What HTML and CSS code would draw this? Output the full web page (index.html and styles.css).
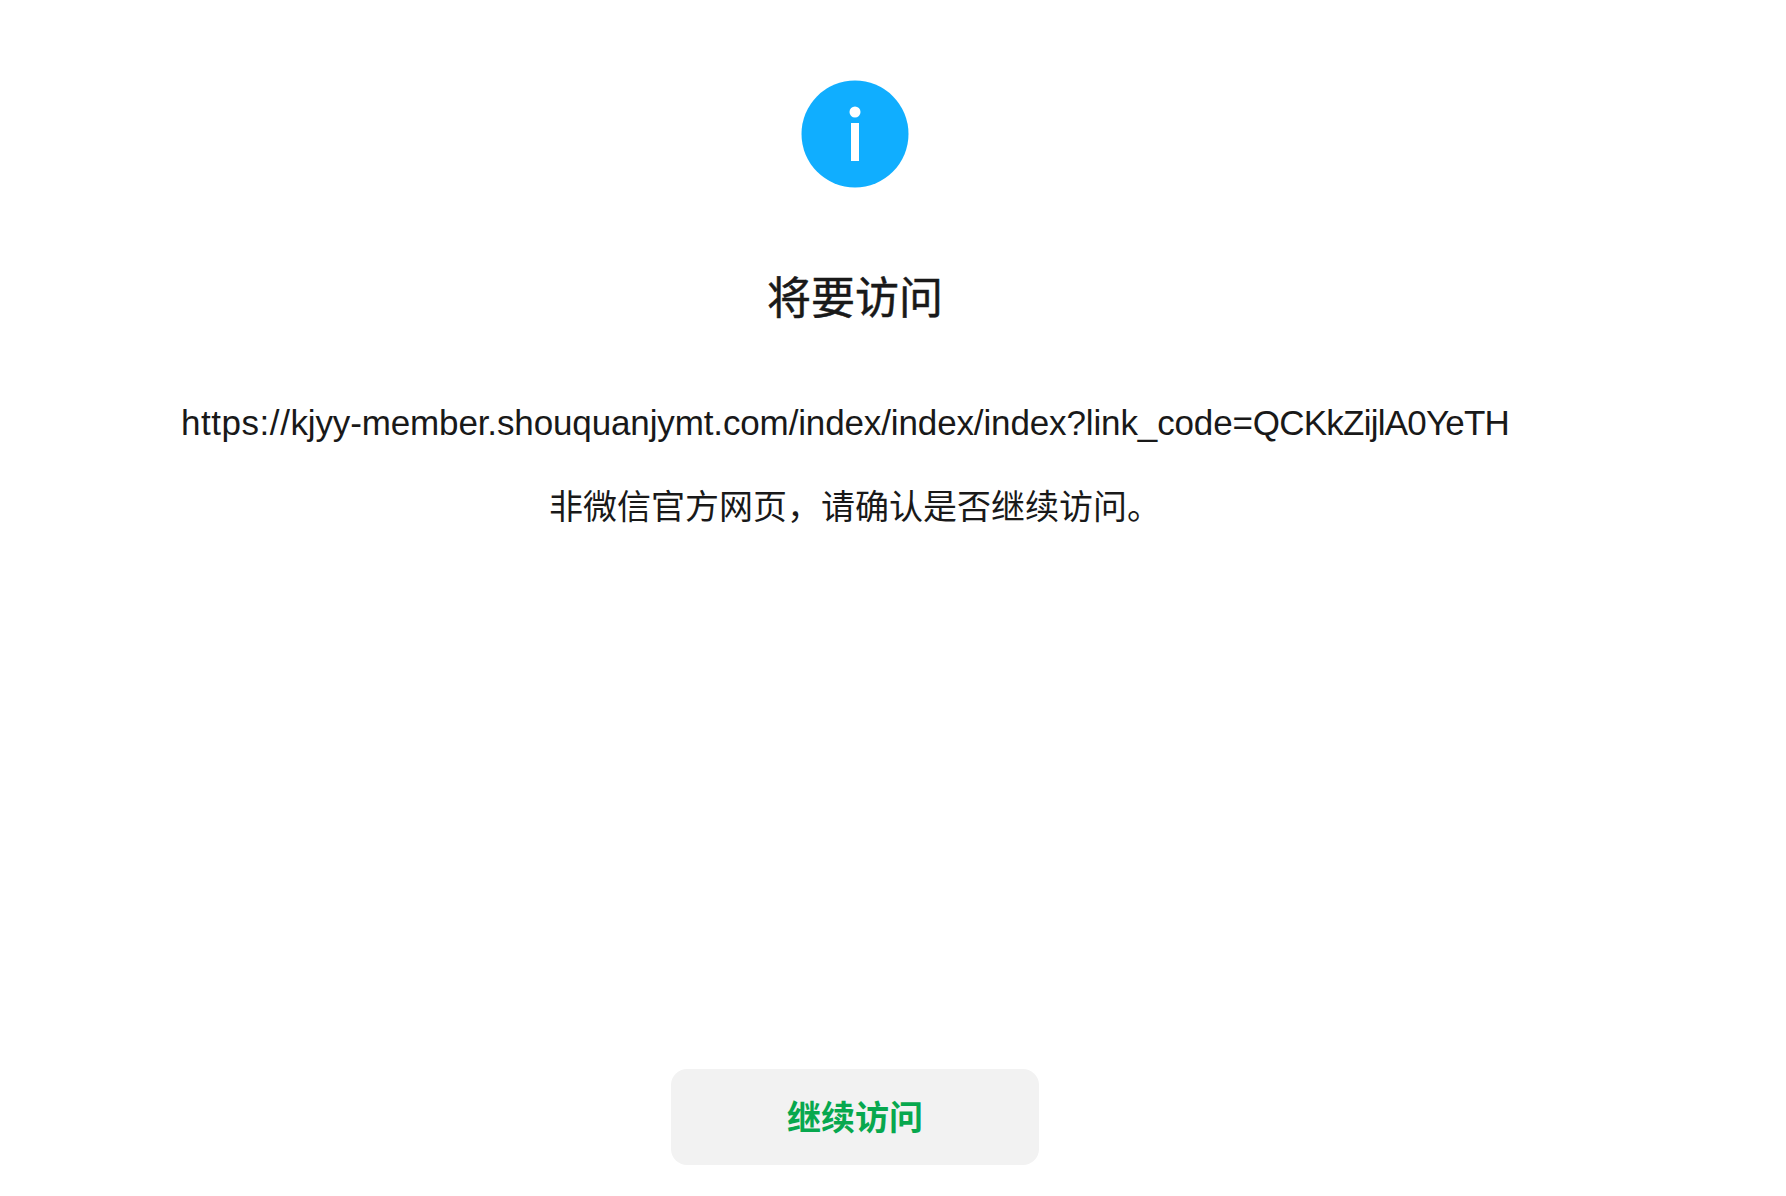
FILE: index.html
```html
<!DOCTYPE html>
<html lang="zh-CN">
<head>
<meta charset="utf-8">
<title>将要访问</title>
<link rel="stylesheet" href="styles.css">
</head>
<body>
<main class="page">
  <div class="top">
    <svg class="icon" viewBox="0 0 108 108" width="108" height="108" aria-hidden="true">
      <circle cx="54" cy="54" r="53.5" fill="#10AEFF"/>
      <circle cx="54" cy="32" r="5.5" fill="#fff"/>
      <rect x="50" y="43" width="8" height="38" fill="#fff"/>
    </svg>
    <h1 class="title">将要访问</h1>
    <p class="url"><span class="url-scheme">https://</span>kjyy-member.shouquanjymt.com/index/index/index?link_code=<span class="url-code">QCKkZijlA0YeTH</span></p>
    <p class="note">非微信官方网页，请确认是否继续访问。</p>
  </div>
  <a class="btn">继续访问</a>
</main>
</body>
</html>
```
FILE: styles.css
```css
html, body { margin: 0; padding: 0; background: #fff; }
body {
  font-family: "Liberation Sans", "Noto Sans CJK SC", sans-serif;
  color: #191919;
}
.page {
  width: 1710px;
  height: 1196px;
  box-sizing: border-box;
  padding: 80px 0 31px;
  display: flex;
  flex-direction: column;
  align-items: center;
  justify-content: space-between;
}
.top { display: flex; flex-direction: column; align-items: center; }
.icon { display: block; }
.title {
  margin: 80px 0 0;
  font-size: 44px;
  line-height: 62px;
  font-weight: 400;
  -webkit-text-stroke: 0.5px #191919;
}
.url {
  margin: 69px 0 0;
  padding-right: 20px;
  font-size: 35px;
  line-height: 48px;
  letter-spacing: -0.13px;
  white-space: nowrap;
}
.url-scheme { letter-spacing: 0.55px; }
.url-code { letter-spacing: -0.78px; }
.note {
  margin: 36px 0 0;
  font-size: 34px;
  line-height: 48px;
}
.btn {
  width: 368px;
  height: 96px;
  border-radius: 16px;
  background: #f2f2f2;
  color: #07a84e;
  font-size: 34px;
  line-height: 46px;
  font-weight: 700;
  padding-top: 2px;
  box-sizing: border-box;
  display: flex;
  align-items: center;
  justify-content: center;
}
```
